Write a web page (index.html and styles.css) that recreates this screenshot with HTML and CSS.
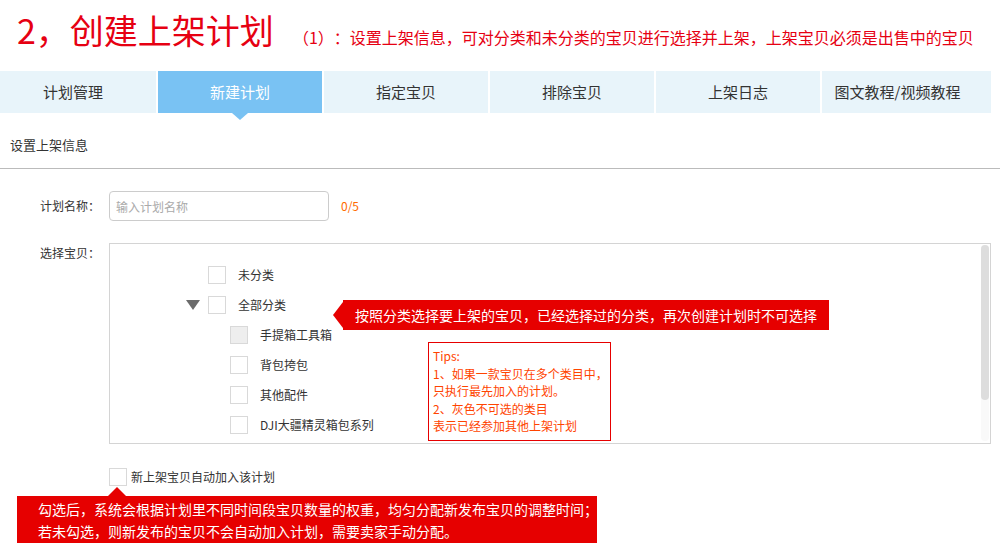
FILE: index.html
```html
<!DOCTYPE html>
<html lang="zh-CN">
<head>
    <meta charset="UTF-8">
    <title>创建上架计划</title>
    <link rel="stylesheet" href="styles.css">
</head>
<body>

<div class="title-row">
    <h1>2，创建上架计划</h1>
    <p class="title-note">（1）：设置上架信息，可对分类和未分类的宝贝进行选择并上架，上架宝贝必须是出售中的宝贝</p>
</div>

<ul class="tabs">
    <li>计划管理</li>
    <li class="active">新建计划</li>
    <li>指定宝贝</li>
    <li>排除宝贝</li>
    <li>上架日志</li>
    <li>图文教程/视频教程</li>
</ul>

<div class="section-title">设置上架信息</div>

<div class="form">
    <div class="form-row">
        <span class="form-label">计划名称：</span>
        <input class="plan-input" type="text" placeholder="输入计划名称">
        <span class="counter">0/5</span>
    </div>

    <div class="form-row pick-row">
        <span class="form-label">选择宝贝：</span>
        <div class="pick-wrap">
            <div class="pick-box">
                <div class="tree-item"><span class="toggle"></span><span class="check"></span>未分类</div>
                <div class="tree-item"><span class="toggle open"></span><span class="check"></span>全部分类</div>
                <div class="tree-item child"><span class="toggle"></span><span class="check disabled"></span>手提箱工具箱</div>
                <div class="tree-item child"><span class="toggle"></span><span class="check"></span>背包挎包</div>
                <div class="tree-item child"><span class="toggle"></span><span class="check"></span>其他配件</div>
                <div class="tree-item child"><span class="toggle"></span><span class="check"></span>DJI大疆精灵箱包系列</div>
                <div class="scroll-track"><div class="scroll-thumb"></div></div>
            </div>
            <div class="tip-bar">按照分类选择要上架的宝贝，已经选择过的分类，再次创建计划时不可选择</div>
            <div class="tips-box">
                Tips:<br>
                1、如果一款宝贝在多个类目中，<br>
                只执行最先加入的计划。<br>
                2、灰色不可选的类目<br>
                表示已经参加其他上架计划
            </div>
        </div>
    </div>

    <div class="auto-row">
        <span class="check"></span>
        <span>新上架宝贝自动加入该计划</span>
    </div>
</div>

<div class="auto-note">
    勾选后，系统会根据计划里不同时间段宝贝数量的权重，均匀分配新发布宝贝的调整时间；<br>
    若未勾选，则新发布的宝贝不会自动加入计划，需要卖家手动分配。
</div>

</body>
</html>
```

FILE: styles.css
```css
* {
    box-sizing: border-box;
}
body {
    margin: 0;
    width: 1000px;
    height: 550px;
    overflow: hidden;
    font-family: "Noto Sans CJK SC", sans-serif;
    font-size: 12px;
    line-height: 1.5;
    color: #333;
    background-color: #ffffff;
    text-spacing-trim: space-all;
}
.title-row {
    display: flex;
    align-items: baseline;
    height: 71px;
    padding: 10px 0 0 17px;
    white-space: nowrap;
    color: #e60012;
}
.title-row h1 {
    flex-shrink: 0;
    margin: 0;
    font-size: 34px;
    font-weight: normal;
    line-height: 40px;
}
.title-note {
    flex-shrink: 0;
    margin: 0 0 0 19px;
    font-size: 16px;
}
.tabs {
    display: grid;
    grid-template-columns: 156px repeat(4, 164px) 169px;
    gap: 2px;
    margin: 0;
    padding: 0;
    list-style: none;
}
.tabs li {
    position: relative;
    height: 42px;
    line-height: 42px;
    text-align: center;
    font-size: 15px;
    background-color: #e8f4fa;
}
.tabs li:first-child {
    padding-right: 10px;
}
.tabs li:last-child {
    padding-right: 18px;
}
.tabs li.active {
    background-color: #79c2f3;
    color: #ffffff;
}
.tabs li.active::after {
    content: "";
    position: absolute;
    left: 50%;
    bottom: -7px;
    margin-left: -8px;
    border-left: 8px solid transparent;
    border-right: 8px solid transparent;
    border-top: 7px solid #79c2f3;
}
.section-title {
    padding: 22px 10px 13px;
    font-size: 13px;
    line-height: 20px;
    border-bottom: 1px solid #bbbbbb;
}
.form {
    padding: 22px 0 0 40px;
}
.form-row {
    display: flex;
    align-items: center;
}
.form-label {
    width: 69px;
    flex-shrink: 0;
}
.plan-input {
    width: 220px;
    height: 30px;
    padding: 0 6px;
    border: 1px solid #cccccc;
    border-radius: 4px;
    font: inherit;
    color: #333;
    outline: none;
}
.plan-input::placeholder {
    color: #aaaaaa;
}
.counter {
    margin-left: 12px;
    color: #ff6a00;
}
.pick-row {
    margin-top: 22px;
    align-items: flex-start;
}
.pick-row .form-label {
    line-height: 20px;
}
.pick-wrap {
    position: relative;
}
.pick-box {
    position: relative;
    width: 882px;
    height: 201px;
    padding: 16px 0 0 76px;
    border: 1px solid #d4d4d4;
    overflow: hidden;
}
.tree-item {
    display: flex;
    align-items: center;
    height: 30px;
}
.tree-item.child {
    padding-left: 22px;
}
.toggle {
    width: 22px;
    flex-shrink: 0;
}
.toggle.open::before {
    content: "";
    display: block;
    width: 0;
    border-left: 7px solid transparent;
    border-right: 7px solid transparent;
    border-top: 10px solid #6b6b6b;
}
.check {
    display: inline-block;
    width: 18px;
    height: 18px;
    margin-right: 12px;
    border: 1px solid #d9d9d9;
    background-color: #ffffff;
    flex-shrink: 0;
}
.check.disabled {
    background-color: #eeeeee;
}
.scroll-track {
    position: absolute;
    top: 1px;
    right: 1px;
    bottom: 2px;
    width: 8px;
    border-radius: 4px;
    background-color: #f9f9f9;
}
.scroll-thumb {
    height: 155px;
    border-radius: 4px;
    background-color: #dddddd;
}
.tip-bar {
    position: absolute;
    left: 234px;
    top: 57px;
    height: 30px;
    padding: 0 12px;
    line-height: 30px;
    font-size: 14px;
    white-space: nowrap;
    color: #ffffff;
    background-color: #e60000;
}
.tip-bar::before {
    content: "";
    position: absolute;
    left: -10px;
    top: 2px;
    border-right: 10px solid #e60000;
    border-top: 13px solid transparent;
    border-bottom: 13px solid transparent;
}
.tips-box {
    position: absolute;
    left: 319px;
    top: 99px;
    width: 183px;
    height: 99px;
    padding: 4px 4px;
    border: 1px solid #e60000;
    line-height: 17.5px;
    white-space: nowrap;
    color: #ff4400;
    background-color: #ffffff;
}
.auto-row {
    display: flex;
    align-items: center;
    margin: 24px 0 0 69px;
}
.auto-row .check {
    margin-right: 4px;
}
.auto-note {
    position: relative;
    width: 580px;
    margin: 10px 0 0 17px;
    padding: 2px 0 1px 21px;
    line-height: 22px;
    font-size: 14px;
    white-space: nowrap;
    color: #ffffff;
    background-color: #e60000;
}
.auto-note::before {
    content: "";
    position: absolute;
    left: 91px;
    top: -9px;
    border-left: 9px solid transparent;
    border-right: 9px solid transparent;
    border-bottom: 9px solid #e60000;
}
```
